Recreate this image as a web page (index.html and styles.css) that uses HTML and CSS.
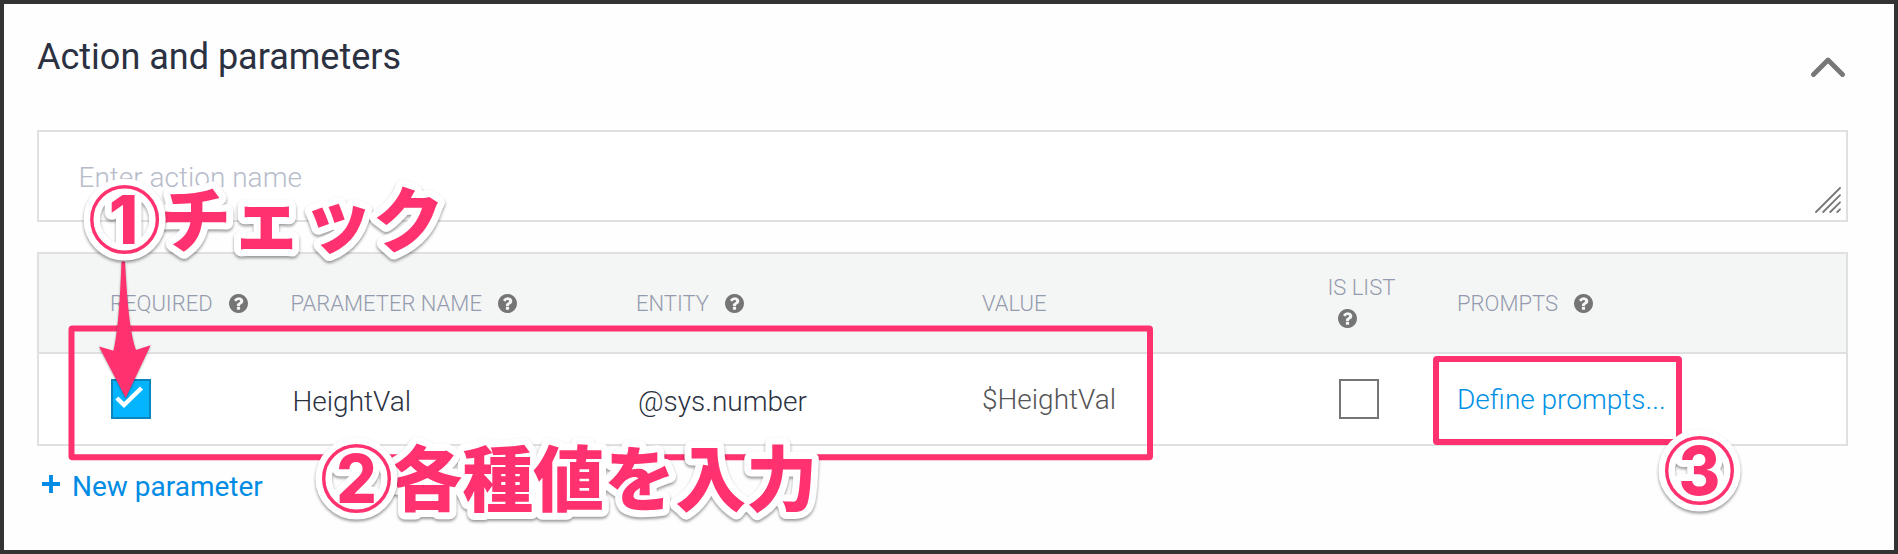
FILE: index.html
```html
<!DOCTYPE html>
<html lang="ja">
<head>
<meta charset="utf-8">
<title>Action and parameters</title>
<link rel="stylesheet" href="styles.css">
</head>
<body>
<svg class="defs" width="0" height="0" aria-hidden="true">
  <symbol id="help" viewBox="0 0 1536 1536"><path d="M896 1248v-192q0-14-9-23t-23-9h-192q-14 0-23 9t-9 23v192q0 14 9 23t23 9h192q14 0 23-9t9-23zm256-672q0-88-55.500-163t-138.500-116-170-41q-243 0-371 213-15 24 8 42l132 100q7 6 19 6 16 0 25-12 53-68 86-92 34-24 86-24 48 0 85.500 26t37.500 59q0 38-20 61t-68 45q-63 28-115.500 86.500t-52.500 125.500v36q0 14 9 23t23 9h192q14 0 23-9t9-23q0-19 21.500-49.500t54.500-49.500q32-18 49-28.500t46-35 44.500-48 28-60.500 12.500-81zm384 192q0 209-103 385.500t-279.500 279.500-385.500 103-385.500-103-279.500-279.500-103-385.500 103-385.500 279.500-279.500 385.500-103 385.500 103 279.500 279.500 103 385.500z"/></symbol>
</svg>
<main class="panel">
  <header class="panel-head">
    <h1 class="title">Action and parameters</h1>
    <svg class="chevron" width="34" height="22" viewBox="0 0 34 22"><path d="M2.500 18.500 17 4l14.500 14.500"/></svg>
  </header>

  <div class="action-field">
    <span class="placeholder">Enter action name</span>
    <svg class="resize" width="26" height="26" viewBox="0 0 26 26"><path d="M1 25 25 1M8.200 25 25 8.200M15.300 25 25 15.300M22.300 25 25 22.300"/></svg>
  </div>

  <section class="table">
    <div class="row row-head">
      <div class="cell">REQUIRED<svg class="help"><use href="#help"/></svg></div>
      <div class="cell">PARAMETER NAME<svg class="help"><use href="#help"/></svg></div>
      <div class="cell">ENTITY<svg class="help"><use href="#help"/></svg></div>
      <div class="cell">VALUE</div>
      <div class="cell cell-stack">IS LIST<svg class="help"><use href="#help"/></svg></div>
      <div class="cell">PROMPTS<svg class="help"><use href="#help"/></svg></div>
    </div>
    <div class="row row-body">
      <div class="cell"><span class="checkbox checked"><svg width="36" height="36" viewBox="0 0 36 36"><path d="M3.800 17 11 24 28.500 7"/></svg></span></div>
      <div class="cell editable">HeightVal</div>
      <div class="cell editable entity">@sys.number</div>
      <div class="cell value">$HeightVal</div>
      <div class="cell cell-list"><span class="checkbox"></span></div>
      <div class="cell prompts">Define prompts...</div>
    </div>
  </section>

  <div class="add">
    <svg class="plus" width="18" height="18" viewBox="0 0 18 18"><path d="M9 0v18M0 9h18"/></svg>
    <span class="add-label">New parameter</span>
  </div>
</main>

<svg class="notes" width="1898" height="554" viewBox="0 0 1898 554">
  <rect class="mark" x="71.500" y="328.500" width="1078.500" height="128.700" rx="1"/>
  <rect class="mark" x="1436" y="359" width="243" height="83" rx="1"/>
  <path class="arrow" d="M121.500 262q1.700-1.500 3.500 0c2.500 45 5 70 11 88l14.600-4.700L125.700 398 99 346.500l14.500 4.300C118.500 330 120.500 290 121.500 262z"/>
  <text class="note" x="160.100" y="245.500">チェック</text>
  <text class="note" x="391.300" y="505">各種値を入力</text>
  <g class="badge" transform="translate(124.600 219.500)">
    <circle class="halo" r="32.800"/>
    <text class="digit" x="-1" y="24.600">1</text>
    <circle class="ring" r="32.800"/>
  </g>
  <g class="badge" transform="translate(356.500 478.500)">
    <circle class="halo" r="32.800"/>
    <text class="digit" transform="scale(.95 1)" x="0" y="24.300">2</text>
    <circle class="ring" r="32.800"/>
  </g>
  <g class="badge" transform="translate(1699.500 470.500)">
    <circle class="halo" r="32.800"/>
    <text class="digit" transform="scale(.95 1)" x="0" y="24.600">3</text>
    <circle class="ring" r="32.800"/>
  </g>
</svg>
</body>
</html>
```

FILE: styles.css
```css
* { box-sizing: border-box; }

body {
  margin: 0;
  font-family: Roboto, "Noto Sans CJK JP", sans-serif;
  color: #2b3141;
}

.defs { position: absolute; }

.panel {
  width: 1898px;
  height: 554px;
  border: 4px solid #333;
  background: #fefefe;
  padding: 0 46px 0 33px;
  overflow: hidden;
}

.panel-head {
  display: flex;
  justify-content: space-between;
  align-items: flex-start;
  height: 126px;
  padding-top: 32px;
}

.title {
  margin: 0;
  font-size: 36px;
  line-height: 42px;
  font-weight: 400;
}

.chevron { margin: 20px 3px 0 0; }
.chevron path { fill: none; stroke: #777; stroke-width: 4.8; stroke-linecap: round; stroke-linejoin: round; }

.action-field {
  display: flex;
  justify-content: space-between;
  align-items: flex-end;
  height: 92px;
  border: 2px solid #e0e0e0;
  background: #fff;
  padding: 0 5px 7px 39.5px;
}

.placeholder {
  font-size: 28px;
  line-height: 32px;
  font-weight: 300;
  color: #b7bccb;
  margin-bottom: 19px;
}

.resize path { fill: none; stroke: #777; stroke-width: 1.8; stroke-linecap: round; }

.table {
  margin-top: 30px;
  border: 2px solid #dfe0e0;
  background: #fff;
}

.row {
  display: grid;
  grid-template-columns: 180.5px 345.5px 346px 345.5px 129.5px 1fr;
  align-items: center;
  padding-left: 71px;
}

.row-head {
  height: 100px;
  border-bottom: 2px solid #dfe0e0;
  background: #f4f6f5;
  font-size: 22px;
  line-height: 26px;
  font-weight: 300;
  color: #949bae;
}

.cell { display: flex; align-items: center; white-space: nowrap; }
.row-head .cell { padding-top: 1px; }

.help { width: 19px; height: 19px; margin-left: 16px; fill: #757575; }

.row-head .cell-stack { flex-direction: column; align-items: flex-start; gap: 8px; padding: 0 0 3px; }
.cell-stack .help { margin-left: 10px; }

.row-body { height: 90px; font-size: 28px; line-height: 32px; font-weight: 300; }
.editable { padding-top: 5px; padding-left: 2px; }
.value { color: #555; padding-top: 2px; }
.prompts { color: #0091e6; padding-top: 2px; }
.cell-list { padding-left: 11.5px; }

.checkbox {
  width: 40px;
  height: 40px;
  border: 2px solid #757575;
  background: #fff;
}

.checked { margin-left: 1px; border-color: #0a85bd; background: #03b5ff; }
.checkbox svg { display: block; }
.checkbox path { fill: none; stroke: #fff; stroke-width: 4.4; }

.add { display: flex; align-items: center; gap: 12px; padding: 24px 0 0 5px; color: #008ce4; }
.plus { margin-bottom: 6px; }
.plus path { stroke: #008ce4; stroke-width: 3.8; }
.add-label { font-size: 28px; line-height: 34px; }

.notes { position: absolute; top: 0; left: 0; }
.mark { fill: none; stroke: #ff316f; stroke-width: 6; }
.arrow { fill: #ff316f; filter: drop-shadow(0 1px 1px rgba(0, 0, 0, .35)); }

.note, .digit {
  font-family: "Noto Sans CJK JP", sans-serif;
  font-size: 71px;
  font-weight: 900;
  fill: #ff316f;
  stroke: #fff;
  stroke-width: 14px;
  stroke-linejoin: round;
  paint-order: stroke;
}

.note, .badge { filter: drop-shadow(0 2px 1.5px rgba(0, 0, 0, .4)); }

.digit { font-family: Inter, "Liberation Sans", sans-serif; font-size: 67px; font-weight: 800; text-anchor: middle; }
.halo { fill: none; stroke: #fff; stroke-width: 16.5; }
.ring { fill: none; stroke: #ff316f; stroke-width: 3.4; }
```
